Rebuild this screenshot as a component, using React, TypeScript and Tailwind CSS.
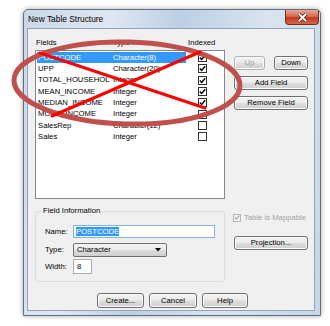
const fields = [
  { name: "POSTCODE", type: "Character(8)", indexed: true },
  { name: "UPP", type: "Character(20)", indexed: true },
  { name: "TOTAL_HOUSEHOL", type: "Integer", indexed: true },
  { name: "MEAN_INCOME", type: "Integer", indexed: true },
  { name: "MEDIAN_INCOME", type: "Integer", indexed: true },
  { name: "MODE_INCOME", type: "Integer", indexed: true },
  { name: "SalesRep", type: "Character(12)", indexed: false },
  { name: "Sales", type: "Integer", indexed: false },
];

function Check({ checked, disabled }: { checked: boolean; disabled?: boolean }) {
  return (
    <div
      className={
        disabled
          ? "w-[8px] h-[8px] border border-[#b4b4b4] bg-[#f4f4f4] flex items-center justify-center"
          : "w-[9px] h-[9px] border border-[#333] bg-white flex items-center justify-center"
      }
    >
      {checked && (
        <svg width="7" height="7" viewBox="0 0 7 7">
          <path d="M0.8 3.4 L2.7 5.4 L6.2 1.2" fill="none" stroke={disabled ? "#a8a8a8" : "#000"} strokeWidth="1.4" />
        </svg>
      )}
    </div>
  );
}

function Button({ label, className, disabled }: { label: string; className: string; disabled?: boolean }) {
  return (
    <div
      className={`flex items-center justify-center rounded-[3px] border bg-[linear-gradient(#f3f3f3,#ebebeb_48%,#dddddd_52%,#cfcfcf)] shadow-[inset_0_0_0_1px_#fbfbfb] ${
        disabled ? "border-[#adb2b5] text-[#a3a3a3]" : "border-[#707070] text-black"
      } ${className}`}
    >
      {label}
    </div>
  );
}

export default function App() {
  return (
    <div className="relative w-[330px] h-[326px] bg-white pt-[9px] pl-[23px] font-['Liberation_Sans',Arial,sans-serif] text-[7.7px] text-black overflow-hidden">
      {/* Dialog window */}
      <div className="w-[298px] h-[307px] flex flex-col border border-[#5f6f82] rounded-t-[5px] bg-[linear-gradient(100deg,#c9d8e8,#dfe8f2_25%,#bccfe3_45%,#d9e4ef_70%,#c6d6e7)] shadow-[0_0_5px_rgba(0,0,0,0.35)] pl-[3px] pr-[5px] pb-[4px]">
        <div className="h-[18px] flex items-start justify-between">
          <span className="text-[8.4px] leading-[18px] pl-[1px]">New Table Structure</span>
          <div className="w-[34px] h-[15px] -mr-[4px] rounded-b-[4px] border border-t-0 border-[#7a2a1c] bg-[linear-gradient(#e9a899,#d36c55_45%,#c4381f_55%,#d5664c)] flex items-center justify-center">
            <svg width="11" height="9" viewBox="0 0 11 9">
              <path d="M2 1 L9 8 M9 1 L2 8" stroke="#4d1a10" strokeWidth="3.4" />
              <path d="M2 1 L9 8 M9 1 L2 8" stroke="#ffffff" strokeWidth="2" />
            </svg>
          </div>
        </div>

        {/* Client area */}
        <div className="flex-1 bg-[#f0f0f0] border border-[#8fa3b9] pl-[7px] pt-[9px]">
          <div className="flex">
            <div className="w-[190px]">
              <div className="h-[12px] flex leading-[10px]">
                <span className="w-[78px] pl-[1px]">Fields</span>
                <span className="w-[75px]">Type</span>
                <span>Indexed</span>
              </div>
              <div className="w-[190px] h-[149px] border border-[#828790] bg-white p-[1px]">
                {fields.map((f, i) => (
                  <div key={f.name} className="h-[11.3px] flex items-center">
                    <div
                      className={`w-[149px] h-full flex items-center pl-[1px] ${
                        i === 0 ? "bg-[#3399ff] text-white" : ""
                      }`}
                    >
                      <span className="w-[75px] whitespace-nowrap">{f.name}</span>
                      <span className="whitespace-nowrap">{f.type}</span>
                    </div>
                    <div className="ml-[12px]">
                      <Check checked={f.indexed} />
                    </div>
                  </div>
                ))}
              </div>
            </div>
            <div className="ml-[9px] mt-[18px] w-[74px] flex flex-col gap-[6px]">
              <div className="flex justify-between">
                <Button label="Up" className="w-[31px] h-[14px]" disabled />
                <Button label="Down" className="w-[34px] h-[14px]" />
              </div>
              <Button label="Add Field" className="w-[74px] h-[14px]" />
              <Button label="Remove Field" className="w-[74px] h-[14px]" />
            </div>
          </div>

          <div className="flex mt-[7px]">
            <fieldset className="w-[190px] h-[76px] border border-[#d5dfe5] rounded-[3px] pl-[9px]">
              <legend className="-ml-[3px] px-[1px] leading-[10px]">Field Information</legend>
              <div className="flex flex-col pt-[9px]">
                <div className="flex items-center h-[13px]">
                  <span className="w-[28px]">Name:</span>
                  <div className="w-[142px] h-[13px] border border-[#7eb4ea] bg-white flex items-center pl-[2px]">
                    <span className="bg-[#3399ff] text-white leading-[9px]">POSTCODE</span>
                  </div>
                </div>
                <div className="flex items-center h-[14px] mt-[5px]">
                  <span className="w-[28px]">Type:</span>
                  <div className="w-[94px] h-[14px] rounded-[2px] border border-[#707070] bg-[linear-gradient(#f3f3f3,#ebebeb_48%,#dddddd_52%,#cfcfcf)] flex items-center justify-between pl-[3px] pr-[5px]">
                    <span>Character</span>
                    <svg width="6" height="4" viewBox="0 0 6 4">
                      <path d="M0 0 L6 0 L3 3.5 Z" fill="#000" />
                    </svg>
                  </div>
                </div>
                <div className="flex items-center h-[15px] mt-[2px]">
                  <span className="w-[28px]">Width:</span>
                  <div className="w-[19px] h-[15px] border border-[#abadb3] bg-white flex items-center pl-[3px]">8</div>
                </div>
              </div>
            </fieldset>
            <div className="ml-[8px] w-[74px] pt-[6px]">
              <div className="flex items-center gap-[3px] text-[#a3a3a3]">
                <Check checked disabled />
                <span className="whitespace-nowrap">Table is Mappable</span>
              </div>
              <Button label="Projection..." className="w-[74px] h-[14px] mt-[12px] ml-[1px]" />
            </div>
          </div>

          <div className="flex gap-[5px] pl-[62px] mt-[11px]">
            <Button label="Create..." className="w-[47px] h-[15px]" />
            <Button label="Cancel" className="w-[48px] h-[15px]" />
            <Button label="Help" className="w-[46px] h-[15px]" />
          </div>
        </div>
      </div>

      {/* Red annotation drawn over the dialog */}
      <svg className="absolute left-0 top-0 pointer-events-none" width="330" height="326" viewBox="0 0 330 326">
        <ellipse cx="127" cy="83" rx="113" ry="41" transform="rotate(1.5 127 83)" fill="none" stroke="#c0504d" strokeWidth="5" />
        <path d="M40 53 L205 108" stroke="#ff0000" strokeWidth="3" strokeLinecap="round" />
        <path d="M200 52 L52 116" stroke="#ff0000" strokeWidth="3" strokeLinecap="round" />
      </svg>
    </div>
  );
}
